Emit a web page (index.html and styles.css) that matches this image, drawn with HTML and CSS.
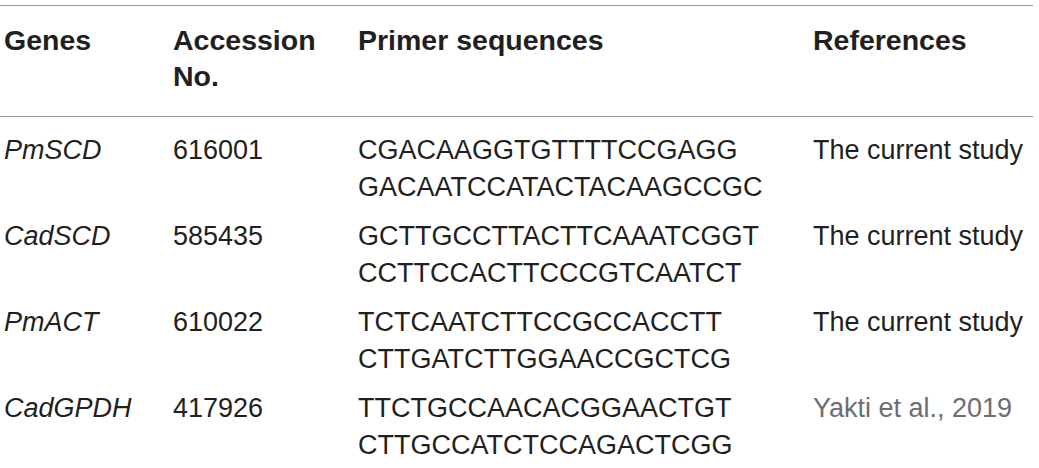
FILE: index.html
```html
<!DOCTYPE html>
<html>
<head>
<meta charset="utf-8">
<link rel="stylesheet" href="styles.css">
</head>
<body>
<table class="primers">
  <thead>
    <tr>
      <th class="c-gene">Genes</th>
      <th class="c-acc">Accession<br>No.</th>
      <th class="c-seq">Primer sequences</th>
      <th class="c-ref">References</th>
    </tr>
  </thead>
  <tbody>
    <tr>
      <td class="gene">PmSCD</td>
      <td>616001</td>
      <td>CGACAAGGTGTTTTCCGAGG<br>GACAATCCATACTACAAGCCGC</td>
      <td>The current study</td>
    </tr>
    <tr>
      <td class="gene">CadSCD</td>
      <td>585435</td>
      <td>GCTTGCCTTACTTCAAATCGGT<br>CCTTCCACTTCCCGTCAATCT</td>
      <td>The current study</td>
    </tr>
    <tr>
      <td class="gene">PmACT</td>
      <td>610022</td>
      <td>TCTCAATCTTCCGCCACCTT<br>CTTGATCTTGGAACCGCTCG</td>
      <td>The current study</td>
    </tr>
    <tr>
      <td class="gene">CadGPDH</td>
      <td>417926</td>
      <td>TTCTGCCAACACGGAACTGT<br>CTTGCCATCTCCAGACTCGG</td>
      <td class="cite">Yakti et al., 2019</td>
    </tr>
  </tbody>
</table>
</body>
</html>
```

FILE: styles.css
```css
html, body {
  margin: 0;
  padding: 0;
  background: #ffffff;
}
body {
  padding-top: 5px;
  font-family: "Liberation Sans", Arial, sans-serif;
  color: #231f20;
}
.primers {
  width: 1033px;
  border-collapse: collapse;
  table-layout: fixed;
}
.primers th,
.primers td {
  box-sizing: border-box;
  text-align: left;
  vertical-align: top;
  white-space: nowrap;
  padding: 0 0 0 4px;
}
.primers thead th {
  font-size: 28.5px;
  font-weight: bold;
  line-height: 36px;
  padding-top: 16px;
  padding-bottom: 22px;
  border-top: 1px solid #9a9a9a;
  border-bottom: 1px solid #9a9a9a;
}
.c-gene { width: 169px; }
.c-acc { width: 185px; }
.c-seq { width: 455px; }
.primers tbody td {
  font-size: 27px;
  line-height: 37px;
  padding-top: 6px;
  padding-bottom: 6px;
}
.primers tbody tr:first-child td {
  padding-top: 15px;
}
.primers td.gene {
  font-style: italic;
}
.primers td.cite {
  color: #6d6e71;
}
```
